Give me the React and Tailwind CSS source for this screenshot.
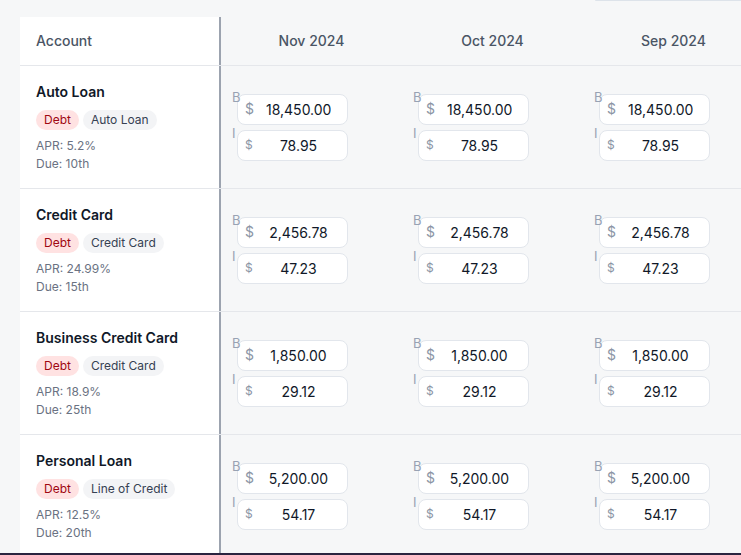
const months = ['Nov 2024', 'Oct 2024', 'Sep 2024']

const accounts = [
  { name: 'Auto Loan', kind: 'Auto Loan', apr: '5.2%', due: '10th', balance: '18,450.00', interest: '78.95' },
  { name: 'Credit Card', kind: 'Credit Card', apr: '24.99%', due: '15th', balance: '2,456.78', interest: '47.23' },
  { name: 'Business Credit Card', kind: 'Credit Card', apr: '18.9%', due: '25th', balance: '1,850.00', interest: '29.12' },
  { name: 'Personal Loan', kind: 'Line of Credit', apr: '12.5%', due: '20th', balance: '5,200.00', interest: '54.17' },
]

function AmountInput({ label, value, small }) {
  return (
    <div className="relative w-[111px] h-[31px]">
      <span className="absolute -left-[5px] -top-[3px] z-10 text-[13px] leading-none text-[#98a2b3]">{label}</span>
      <div className="flex h-full items-center rounded-lg border border-[#e2e6ec] bg-white">
        <span className={`absolute left-[8px] text-[#8b95a5] ${small ? 'text-xs' : 'text-sm'}`}>$</span>
        <input
          readOnly
          value={value}
          className="h-full w-full bg-transparent pl-7 pr-4 text-center text-sm text-gray-900 outline-none"
        />
      </div>
    </div>
  )
}

export default function App() {
  return (
    <div className="flex h-[555px] w-[741px] flex-col overflow-hidden bg-[#f6f7f8] font-['Inter',sans-serif]">
      <div className="flex h-[17px] shrink-0 justify-end">
        <div className="h-px w-[146px] rounded-bl bg-[#dde3ea]" />
      </div>

      <div className="flex-1 overflow-hidden pl-5">
        <div className="w-max">
          <div className="flex h-[49px] border-b border-[#e5e7eb]">
            <div className="flex w-[201px] shrink-0 items-center border-r-2 border-[#9ca3af] bg-white px-4 text-sm font-medium text-gray-600">
              Account
            </div>
            {months.map((m) => (
              <div key={m} className="flex w-[181px] shrink-0 items-center justify-center text-sm font-medium text-gray-600">
                {m}
              </div>
            ))}
          </div>

          {accounts.map((a) => (
            <div key={a.name} className="flex h-[123px] border-b border-[#e5e7eb]">
              <div className="w-[201px] shrink-0 border-r-2 border-[#9ca3af] bg-white px-4 pt-4">
                <p className="text-sm font-semibold text-gray-900">{a.name}</p>
                <div className="mt-2 flex gap-1">
                  <span className="rounded-full bg-red-100 px-2 py-0.5 text-xs text-red-800">Debt</span>
                  <span className="rounded-full bg-gray-100 px-2 py-0.5 text-xs text-gray-700">{a.kind}</span>
                </div>
                <div className="mt-2 space-y-0.5 text-xs text-gray-500">
                  <p>APR: {a.apr}</p>
                  <p>Due: {a.due}</p>
                </div>
              </div>
              {months.map((m) => (
                <div key={m} className="flex w-[181px] shrink-0 flex-col justify-center gap-[5px] pl-4">
                  <AmountInput label="B" value={a.balance} />
                  <AmountInput label="I" value={a.interest} small />
                </div>
              ))}
            </div>
          ))}
        </div>
      </div>

      <div className="h-[2px] shrink-0 bg-[#2a2440]" />
    </div>
  )
}
